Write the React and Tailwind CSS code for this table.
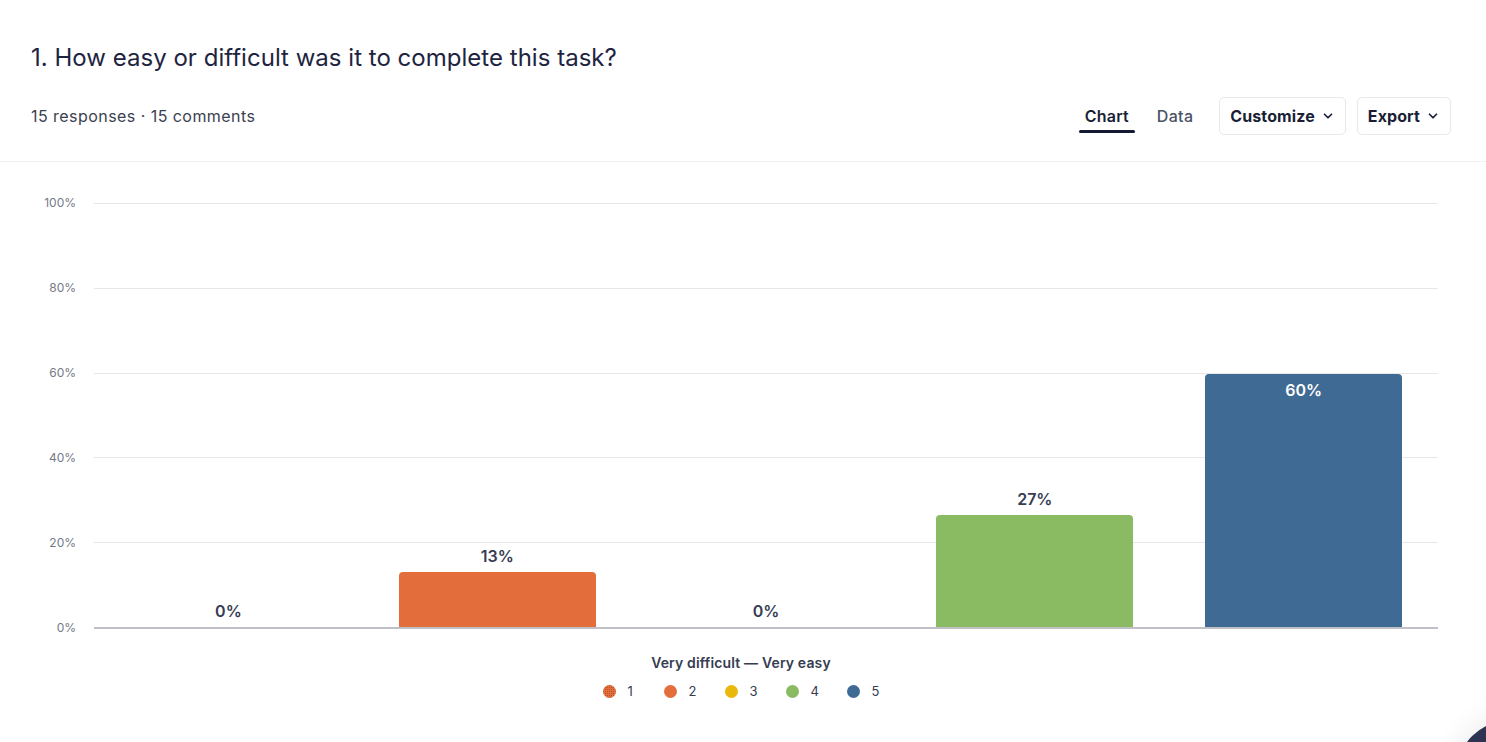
import React from "react";
import { ChevronDown } from "lucide-react";

const bars = [
  { label: "0%", pct: 0, color: "#e36d3b" },
  { label: "13%", pct: 13.0, color: "#e36d3b" },
  { label: "0%", pct: 0, color: "#e8b90a" },
  { label: "27%", pct: 26.4, color: "#8aba62" },
  { label: "60%", pct: 59.6, color: "#3f6a94", inside: true },
];

const legend = [
  { n: "1", color: "#e36d3b", dotted: true },
  { n: "2", color: "#e36d3b" },
  { n: "3", color: "#e8b90a" },
  { n: "4", color: "#8aba62" },
  { n: "5", color: "#3f6a94" },
];

function Dot({ color, dotted }) {
  if (dotted) {
    return (
      <svg width="13" height="13" viewBox="0 0 13 13">
        <defs>
          <pattern id="dots" width="2" height="2" patternUnits="userSpaceOnUse">
            <rect width="2" height="2" fill="#e36d3b" />
            <rect width="1" height="1" fill="#b9532a" />
          </pattern>
        </defs>
        <circle cx="6.5" cy="6.5" r="6.5" fill="url(#dots)" />
      </svg>
    );
  }
  return <span className="block w-[13px] h-[13px] rounded-full" style={{ backgroundColor: color }} />;
}

export default function App() {
  return (
    <div className="relative w-[1486px] h-[742px] overflow-hidden bg-white font-['Inter',sans-serif] text-[#1e2440]">
      <div className="pl-[31px] pr-[35px] pt-[41px]">
        <h1 className="text-[24px] leading-[34px] font-normal text-[#1e2440] tracking-[0.02px]">
          1. How easy or difficult was it to complete this task?
        </h1>
        <div className="mt-[22px] flex items-center justify-between h-[38px]">
          <div className="text-[16px] tracking-[0.45px] text-[#3b4150]">15 responses · 15 comments</div>
          <div className="flex items-center h-full">
            <div className="relative h-full flex items-center px-[6px] text-[16px] font-semibold tracking-[0.2px] text-[#1a1f36]">
              Chart
              <span className="absolute left-0 right-0 bottom-[2px] h-[3px] rounded-full bg-[#141a33]" />
            </div>
            <div className="ml-[16px] px-[6px] text-[16px] font-medium tracking-[0.3px] text-[#4a5166]">Data</div>
            <button className="ml-[20px] h-[38px] flex items-center gap-[6px] pl-[10px] pr-[10px] border border-[#e6e8ec] rounded-[5px] text-[16px] font-bold tracking-[0.1px] text-[#1a1f36]">
              Customize
              <ChevronDown size={14} strokeWidth={3} />
            </button>
            <button className="ml-[11px] h-[38px] flex items-center gap-[6px] pl-[10px] pr-[10px] border border-[#e6e8ec] rounded-[5px] text-[16px] font-bold tracking-[0.1px] text-[#1a1f36]">
              Export
              <ChevronDown size={14} strokeWidth={3} />
            </button>
          </div>
        </div>
      </div>
      <div className="mt-[26px] h-px bg-[#f0f1f3]" />

      <div className="flex mt-[33px]">
        <div className="w-[76px] h-[441px] flex flex-col justify-between items-end">
          {["100%", "80%", "60%", "40%", "20%", "0%"].map((t) => (
            <div key={t} className="h-4 leading-4 text-[12px] text-[#747987]">{t}</div>
          ))}
        </div>
        <div className="ml-[18px] mt-[8px] relative w-[1344px] h-[426px]">
          <div className="absolute inset-0 flex flex-col justify-between">
            <div className="h-px bg-[#e6e7ea]" />
            <div className="h-px bg-[#e6e7ea]" />
            <div className="h-px bg-[#e6e7ea]" />
            <div className="h-px bg-[#e6e7ea]" />
            <div className="h-px bg-[#e6e7ea]" />
            <div className="h-[2px] bg-[#bfc1c6]" />
          </div>
          <div className="absolute left-0 right-0 top-0 bottom-[2px] grid grid-cols-5">
            {bars.map((b, i) => (
              <div key={i} className="flex flex-col justify-end items-center">
                {!b.inside && (
                  <div className="mb-[6px] text-[16px] leading-5 font-semibold text-[#363c52]">{b.label}</div>
                )}
                {b.pct > 0 && (
                  <div
                    className="w-[197px] rounded-t-[4px] flex justify-center"
                    style={{ height: `${b.pct * 4.25}px`, backgroundColor: b.color }}
                  >
                    {b.inside && (
                      <div className="pt-[6px] text-[16px] leading-5 font-semibold text-white">{b.label}</div>
                    )}
                  </div>
                )}
              </div>
            ))}
          </div>
        </div>
      </div>

      <div className="mt-[17px] flex flex-col items-center">
        <div className="-ml-[4px] text-[14px] leading-[20px] font-semibold tracking-[0.15px] text-[#363c52]">Very difficult — Very easy</div>
        <div className="mt-[9px] flex items-center gap-[24px] text-[13px] text-[#363c52]">
          {legend.map((l) => (
            <div key={l.n} className="flex items-center gap-[12px] w-[37px]">
              <Dot color={l.color} dotted={l.dotted} />
              <span>{l.n}</span>
            </div>
          ))}
        </div>
      </div>

      <div className="absolute left-[1456px] top-[720px] w-[110px] h-[110px] rounded-full bg-[#2d3350] shadow-[0_0_24px_8px_rgba(0,0,0,0.06)]" />
    </div>
  );
}
